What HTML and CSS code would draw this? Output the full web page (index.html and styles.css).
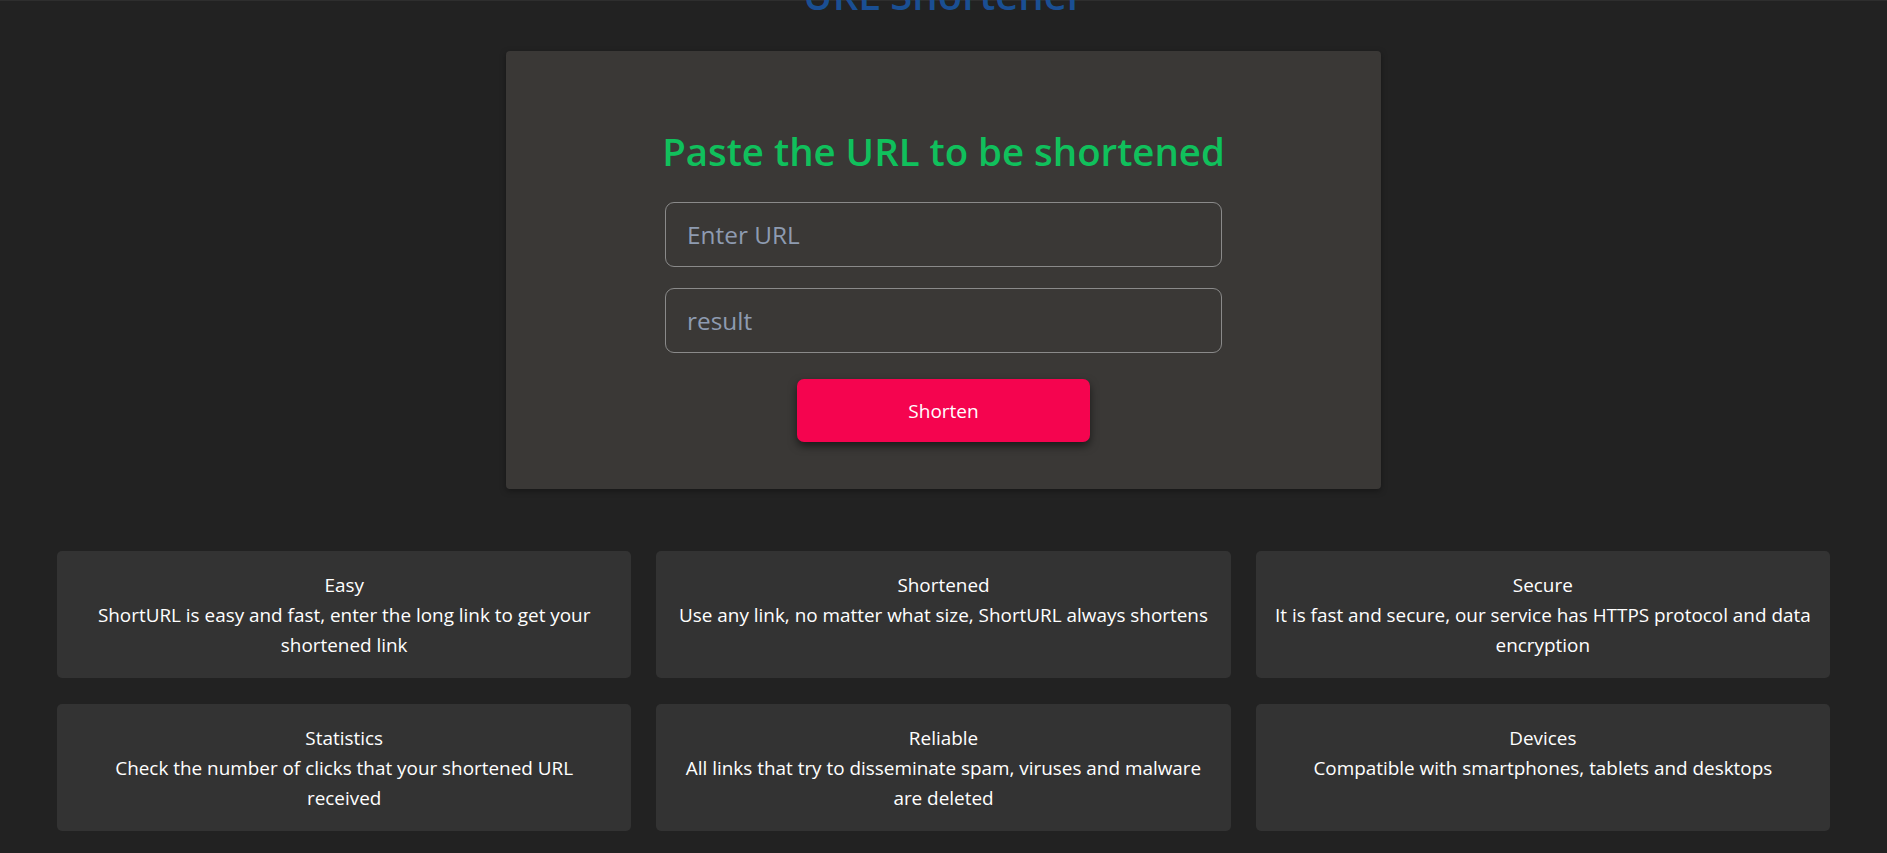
FILE: index.html
```html
<!DOCTYPE html>
<html lang="en">
<head>
<meta charset="utf-8">
<title>URL Shortener</title>
<link rel="stylesheet" href="styles.css">
</head>
<body>
<div class="topline"></div>
<h1 class="site-title">URL Shortener</h1>
<section class="shortener">
  <h2 class="shortener-heading">Paste the URL to be shortened</h2>
  <form class="shortener-form">
    <input class="field" type="text" placeholder="Enter URL">
    <input class="field" type="text" placeholder="result">
    <button class="btn-shorten" type="button">Shorten</button>
  </form>
</section>
<section class="features">
  <div class="feature"><div class="feature-title">Easy</div><div class="feature-text">ShortURL is easy and fast, enter the long link to get your shortened link</div></div>
  <div class="feature"><div class="feature-title">Shortened</div><div class="feature-text">Use any link, no matter what size, ShortURL always shortens</div></div>
  <div class="feature"><div class="feature-title">Secure</div><div class="feature-text">It is fast and secure, our service has HTTPS protocol and data encryption</div></div>
  <div class="feature"><div class="feature-title">Statistics</div><div class="feature-text">Check the number of clicks that your shortened URL<br>received</div></div>
  <div class="feature"><div class="feature-title">Reliable</div><div class="feature-text">All links that try to disseminate spam, viruses and malware are deleted</div></div>
  <div class="feature"><div class="feature-title">Devices</div><div class="feature-text">Compatible with smartphones, tablets and desktops</div></div>
</section>
</body>
</html>
```
FILE: styles.css
```css
* { box-sizing: border-box; }

html, body {
  margin: 0;
  padding: 0;
  background: #222222;
  font-family: "Open Sans", "Noto Sans", sans-serif;
  color: #ffffff;
  overflow: hidden;
}

.topline {
  height: 1px;
  background: #2e2e2e;
}

.site-title {
  margin: -30px 0 32px;
  height: 48px;
  line-height: 48px;
  font-size: 40px;
  font-weight: 600;
  color: #1a4f93;
  text-align: center;
}

.shortener {
  width: 875px;
  height: 438px;
  margin: 0 auto;
  padding-top: 76px;
  background: #3a3836;
  border-radius: 4px;
  box-shadow: 0 2px 6px rgba(0, 0, 0, 0.35);
  display: flex;
  flex-direction: column;
  align-items: center;
}

.shortener-heading {
  margin: 0;
  height: 48px;
  line-height: 48px;
  font-size: 38.4px;
  font-weight: 600;
  color: #10c05c;
  text-align: center;
  white-space: nowrap;
}

.shortener-form {
  margin-top: 27px;
  width: 557px;
  display: flex;
  flex-direction: column;
  align-items: center;
  gap: 21px;
}

.field {
  width: 100%;
  height: 65px;
  padding: 0 21px;
  background: transparent;
  border: 1px solid #8a8a8a;
  border-radius: 9px;
  font-family: "Open Sans", "Noto Sans", sans-serif;
  font-size: 24.4px;
  color: #ffffff;
  outline: none;
}

.field::placeholder {
  color: #8e9bb1;
}

.btn-shorten {
  margin-top: 5px;
  width: 293px;
  height: 63px;
  border: none;
  border-radius: 7px;
  background: #f5044f;
  color: #ffffff;
  font-family: "Open Sans", "Noto Sans", sans-serif;
  font-size: 19px;
  box-shadow: 0 4px 8px rgba(0, 0, 0, 0.55);
}

.features {
  margin-top: 62px;
  padding: 0 57px;
  display: grid;
  grid-template-columns: repeat(3, 1fr);
  column-gap: 25px;
  row-gap: 26px;
}

.feature {
  min-height: 127px;
  padding: 19px 16px 18px;
  background: #333333;
  border-radius: 5px;
  text-align: center;
  font-size: 18.9px;
  line-height: 30px;
  color: #ffffff;
}
```
